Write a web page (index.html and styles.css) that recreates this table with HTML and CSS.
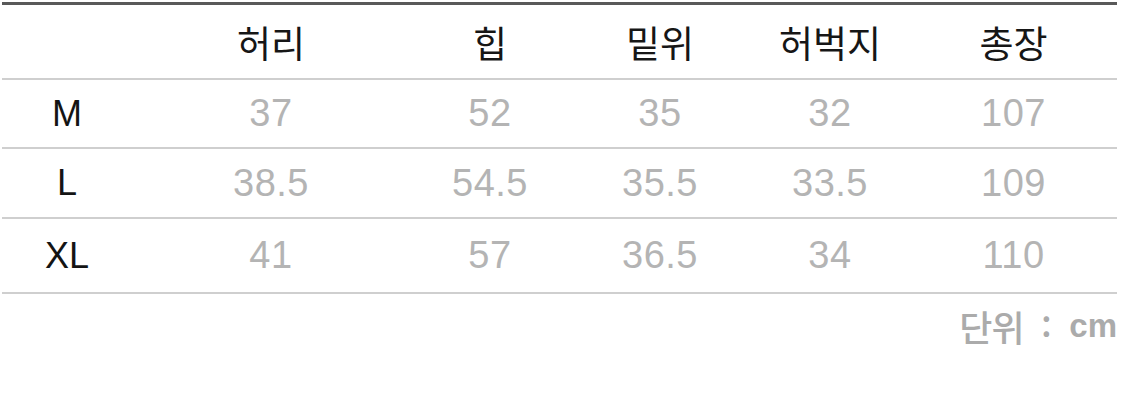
FILE: index.html
```html
<!DOCTYPE html>
<html lang="ko">
<head>
<meta charset="utf-8">
<link rel="stylesheet" href="styles.css">
</head>
<body>
<div class="wrap">
  <div class="table">
    <div class="row head">
      <div class="cell"></div>
      <div class="cell">허리</div>
      <div class="cell">힙</div>
      <div class="cell">밑위</div>
      <div class="cell">허벅지</div>
      <div class="cell">총장</div>
    </div>
    <div class="row r1">
      <div class="cell size">M</div>
      <div class="cell num">37</div>
      <div class="cell num">52</div>
      <div class="cell num">35</div>
      <div class="cell num">32</div>
      <div class="cell num">107</div>
    </div>
    <div class="row r2">
      <div class="cell size">L</div>
      <div class="cell num">38.5</div>
      <div class="cell num">54.5</div>
      <div class="cell num">35.5</div>
      <div class="cell num">33.5</div>
      <div class="cell num">109</div>
    </div>
    <div class="row r3">
      <div class="cell size">XL</div>
      <div class="cell num">41</div>
      <div class="cell num">57</div>
      <div class="cell num">36.5</div>
      <div class="cell num">34</div>
      <div class="cell num">110</div>
    </div>
  </div>
  <div class="unit"><span class="ko">단위</span><span class="colon">:</span><span class="cm">cm</span></div>
</div>
</body>
</html>
```
FILE: styles.css
```css
html, body {
  margin: 0;
  padding: 0;
  background: #ffffff;
}
body {
  font-family: "Liberation Sans", "Noto Sans CJK KR", sans-serif;
  width: 1125px;
  height: 407px;
  overflow: hidden;
}
.wrap {
  padding: 2px 8px 0 2px;
}
.table {
  border-top: 3px solid #595959;
}
.row {
  display: grid;
  grid-template-columns: 130px 278px 160px 180px 160px 207px;
  align-items: center;
  border-bottom: 2px solid #cfcfcf;
}
.head { height: 73px; }
.r1 { height: 67px; }
.r2 { height: 68px; }
.r3 { height: 73px; }
.cell {
  text-align: center;
}
.head .cell {
  font-family: "Noto Sans CJK KR", sans-serif;
  font-size: 37px;
  color: #161616;
  line-height: 1;
  padding-top: 2px;
}
.size {
  font-size: 36px;
  color: #141414;
}
.num {
  font-size: 38px;
  letter-spacing: 0.5px;
  color: #b4b4b4;
}
.unit {
  display: flex;
  justify-content: flex-end;
  align-items: center;
  gap: 18px;
  color: #ababab;
  margin-top: 12px;
  height: 40px;
}
.ko {
  font-family: "Noto Sans CJK KR", sans-serif;
  font-weight: 500;
  font-size: 36px;
  letter-spacing: -1px;
}
.colon {
  font-family: "Noto Sans CJK KR", sans-serif;
  font-weight: 700;
  font-size: 30px;
}
.cm {
  font-family: "Liberation Sans", sans-serif;
  font-weight: 700;
  font-size: 33px;
}
```
